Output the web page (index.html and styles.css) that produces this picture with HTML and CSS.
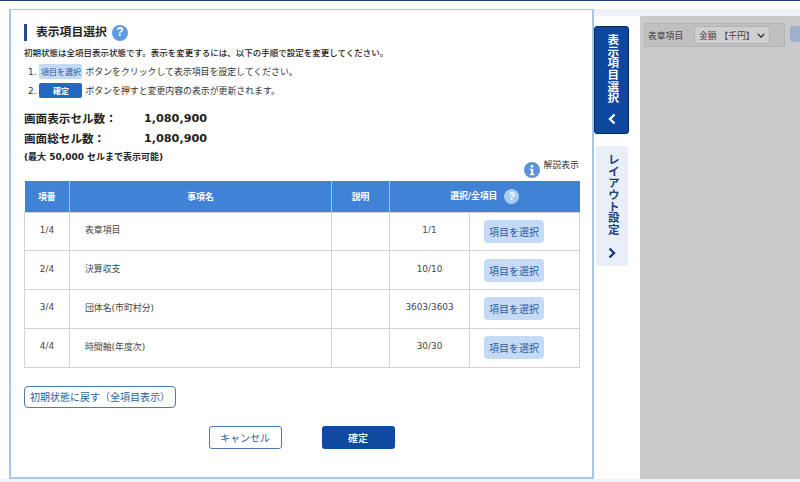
FILE: index.html
```html
<!DOCTYPE html>
<html lang="ja">
<head>
<meta charset="utf-8">
<title>表示項目選択</title>
<link rel="stylesheet" href="styles.css">
</head>
<body>
<div class="topbar"></div>
<div class="main">
  <section class="panel">
    <h1 class="title">表示項目選択<span class="help help-title">?</span></h1>
    <p class="intro">初期状態は全項目表示状態です。表示を変更するには、以下の手順で設定を変更してください。</p>
    <div class="step step-one">1.<span class="chip chip-light">項目を選択</span>ボタンをクリックして表示項目を設定してください。</div>
    <div class="step step-two">2.<span class="chip chip-dark">確定</span>ボタンを押すと変更内容の表示が更新されます。</div>
    <div class="count"><span class="count-label">画面表示セル数：</span><span class="count-value">1,080,900</span></div>
    <div class="count"><span class="count-label">画面総セル数：</span><span class="count-value">1,080,900</span></div>
    <p class="limit">(最大 50,000 セルまで表示可能)</p>
    <div class="explain"><span class="info">
      <svg viewBox="0 0 16 16" width="16" height="16"><circle cx="8" cy="8" r="8" fill="#5b93d6"/><circle cx="8" cy="4.3" r="1.4" fill="#fff"/><path d="M5.8 6.8h3.4v5h1.2v1.4H5.7v-1.4h1.4V8.2H5.8z" fill="#fff"/></svg>
    </span><span class="explain-text">解説表示</span></div>
    <table class="items">
      <colgroup><col class="c1"><col class="c2"><col class="c3"><col class="c4"><col class="c5"></colgroup>
      <thead>
        <tr><th>項番</th><th>事項名</th><th>説明</th><th colspan="2">選択/全項目<span class="help help-th">?</span></th></tr>
      </thead>
      <tbody>
        <tr><td class="ctr">1/4</td><td class="name">表章項目</td><td></td><td class="ctr">1/1</td><td><button class="pick">項目を選択</button></td></tr>
        <tr><td class="ctr">2/4</td><td class="name">決算収支</td><td></td><td class="ctr">10/10</td><td><button class="pick">項目を選択</button></td></tr>
        <tr><td class="ctr">3/4</td><td class="name">団体名(市町村分)</td><td></td><td class="ctr">3603/3603</td><td><button class="pick">項目を選択</button></td></tr>
        <tr><td class="ctr">4/4</td><td class="name">時間軸(年度次)</td><td></td><td class="ctr">30/30</td><td><button class="pick">項目を選択</button></td></tr>
      </tbody>
    </table>
    <button class="reset">初期状態に戻す（全項目表示）</button>
    <div class="actions">
      <button class="cancel">キャンセル</button>
      <button class="confirm">確定</button>
    </div>
  </section>
  <aside class="side">
    <div class="side-strip"></div>
    <div class="tab tab-active">
      <span class="tab-text">表示項目選択</span>
      <svg class="chev" viewBox="0 0 10 12" width="10" height="12"><path d="M7.5 1.5 3 6l4.5 4.5" fill="none" stroke="#fff" stroke-width="2.4"/></svg>
    </div>
    <div class="tab tab-idle">
      <span class="tab-text">レイアウト設定</span>
      <svg class="chev" viewBox="0 0 10 12" width="10" height="12"><path d="M2.5 1.5 7 6l-4.5 4.5" fill="none" stroke="#1c3f7c" stroke-width="2.4"/></svg>
    </div>
  </aside>
  <div class="content">
    <div class="content-strip"></div>
    <div class="stage">
      <div class="toolbar">
        <span class="tool-label">表章項目</span>
        <span class="select">金額 【千円】<svg viewBox="0 0 10 6" width="8" height="5"><path d="M1 1l4 4 4-4" fill="none" stroke="#222" stroke-width="1.6"/></svg></span>
      </div>
      <span class="tool-btn"></span>
    </div>
  </div>
</div>
<div class="bottom"></div>
</body>
</html>
```
FILE: styles.css
```css
* { box-sizing: border-box; }
html, body { margin: 0; padding: 0; }
body {
  width: 800px;
  height: 482px;
  overflow: hidden;
  background: #fff;
  font-family: "DejaVu Sans", "Noto Sans CJK JP", sans-serif;
  color: #333;
  display: flex;
  flex-direction: column;
}
.topbar { height: 1px; background: #1d4473; flex: none; }
.main { display: flex; height: 478px; flex: none; }
.bottom { height: 3px; background: #eef2f9; flex: none; }

.panel {
  width: 585px;
  height: 470px;
  margin: 8px 0 0 9px;
  border-style: solid;
  border-color: #a8c6e8;
  border-width: 1px 2px 2px 2px;
  padding: 14px 13px 0;
  flex: none;
  background: #fff;
}
.title {
  margin: 0;
  height: 17px;
  border-left: 3px solid #1c4f91;
  padding-left: 9px;
  font-size: 11.8px;
  line-height: 17px;
  font-weight: 700;
  color: #222;
  display: flex;
  align-items: center;
}
.help {
  display: inline-flex;
  align-items: center;
  justify-content: center;
  border-radius: 50%;
  background: #5b9bdf;
  color: #fff;
  font-family: "Liberation Sans", sans-serif;
  font-weight: 700;
}
.help-title { width: 16px; height: 16px; font-size: 12px; margin-left: 5px; }
.help-th { width: 15px; height: 15px; font-size: 11px; margin-left: 7px; background: #a9cdf2; }
.intro { margin: 6px 0 0; font-size: 8.5px; line-height: 13px; font-weight: 500; color: #222; white-space: nowrap; }
.step { display: flex; align-items: center; height: 15px; font-size: 8.9px; color: #333; padding-left: 4px; white-space: nowrap; }
.step-one { margin-top: 4px; }
.step-two { margin-top: 4px; }
.chip { display: inline-flex; align-items: center; justify-content: center; margin: 0 3px 0 3px; height: 15px; width: 43px; border-radius: 2px; font-size: 8px; }
.chip-light { background: #c5daf5; color: #2a5a9a; }
.chip-dark { background: #2268bf; color: #fff; font-weight: 700; }
.count { display: flex; line-height: 20px; font-weight: 700; color: #222; white-space: nowrap; }
.count-label { width: 120px; font-size: 11.6px; }
.count-value { font-size: 11.2px; }
.step-two + .count { margin-top: 11px; }
.limit { margin: 2px 0 0; font-size: 9px; line-height: 13px; font-weight: 700; color: #222; white-space: nowrap; }
.explain { display: flex; justify-content: flex-end; align-items: flex-start; height: 22px; margin-top: -5px; font-size: 8.9px; line-height: 12px; color: #333; }
.info { display: block; height: 16px; margin: 3px 4px 0 0; }
.info svg { display: block; }
.items { width: 555px; border-collapse: collapse; table-layout: fixed; font-size: 8.9px; }
.c1 { width: 45px; } .c2 { width: 262px; } .c3 { width: 58px; } .c4 { width: 80px; } .c5 { width: 110px; }
.items th { height: 31px; padding: 0; background: #3f82d6; color: #fff; font-weight: 700; font-size: 8.8px; border-left: 1px solid #9fc1ea; }
.items th:first-child { border-left: 0; }
.items th:last-child .help { vertical-align: middle; }
.items td { height: 38.75px; padding: 0 0 3px; border: 1px solid #d4d4d4; color: #444; }
.ctr { text-align: center; }
.items td.name { padding-left: 15px; }
.items td:last-child { padding: 0 0 0 14px; }
.pick { display: block; width: 60px; height: 23px; padding: 0; border: 0; border-radius: 4px; background: #c5daf5; color: #2d5c99; font: inherit; font-size: 10px; }
.reset { display: block; width: 152px; height: 22px; margin-top: 18px; padding: 0; background: #fff; border: 1px solid #4f79ac; border-radius: 4px; color: #2d5c99; font: inherit; font-size: 10px; }
.actions { display: flex; justify-content: center; gap: 40px; margin-top: 18px; width: 555px; }
.cancel, .confirm { width: 73px; height: 23px; padding: 0; border-radius: 3px; font: inherit; font-size: 10px; }
.cancel { background: #fff; border: 1px solid #4f79ac; color: #2d5c99; }
.confirm { background: #0d4aa0; border: 0; color: #fff; font-weight: 500; }

.side { width: 46px; flex: none; display: flex; flex-direction: column; align-items: flex-start; padding-top: 8px; }
.side-strip { height: 7px; width: 46px; background: #eef2f9; flex: none; }
.tab { display: flex; flex-direction: column; align-items: center; flex: none; }
.tab-text { writing-mode: vertical-rl; text-orientation: upright; font-size: 11.6px; font-weight: 700; line-height: 1; }
.tab-active { width: 35px; height: 108px; margin-top: 10px; background: #0e479d; border: 1px solid #0b2a55; border-radius: 3px; color: #fff; padding-top: 7px; }
.tab-active .chev { margin-top: 9px; }
.tab-idle { width: 32px; height: 120px; margin: 12px 0 0 2px; background: #e9eff8; border-radius: 3px; color: #1c3f7c; padding-top: 8px; }
.tab-idle .chev { margin-top: 12px; }

.content { flex: 1; display: flex; flex-direction: column; padding-top: 8px; min-width: 0; }
.content-strip { height: 7px; background: #eef2f9; flex: none; }
.stage { flex: 1; background: #cacaca; display: flex; align-items: flex-start; padding: 7px 0 0 4px; gap: 5px; overflow: hidden; }
.toolbar { width: 141px; height: 24px; flex: none; background: #c0c0c0; border: 1px solid #b4b4b4; display: flex; align-items: center; padding-left: 3px; font-size: 8.8px; color: #444; white-space: nowrap; }
.tool-label { width: 46px; flex: none; }
.select { width: 76px; height: 18px; background: #cfcfcf; border: 1px solid #b4b4b4; display: flex; align-items: center; justify-content: space-between; padding: 0 4px; font-size: 8.8px; }
.tool-btn { width: 20px; height: 16px; flex: none; margin-top: 3px; background: #9fb0cc; border-radius: 3px; }
```
